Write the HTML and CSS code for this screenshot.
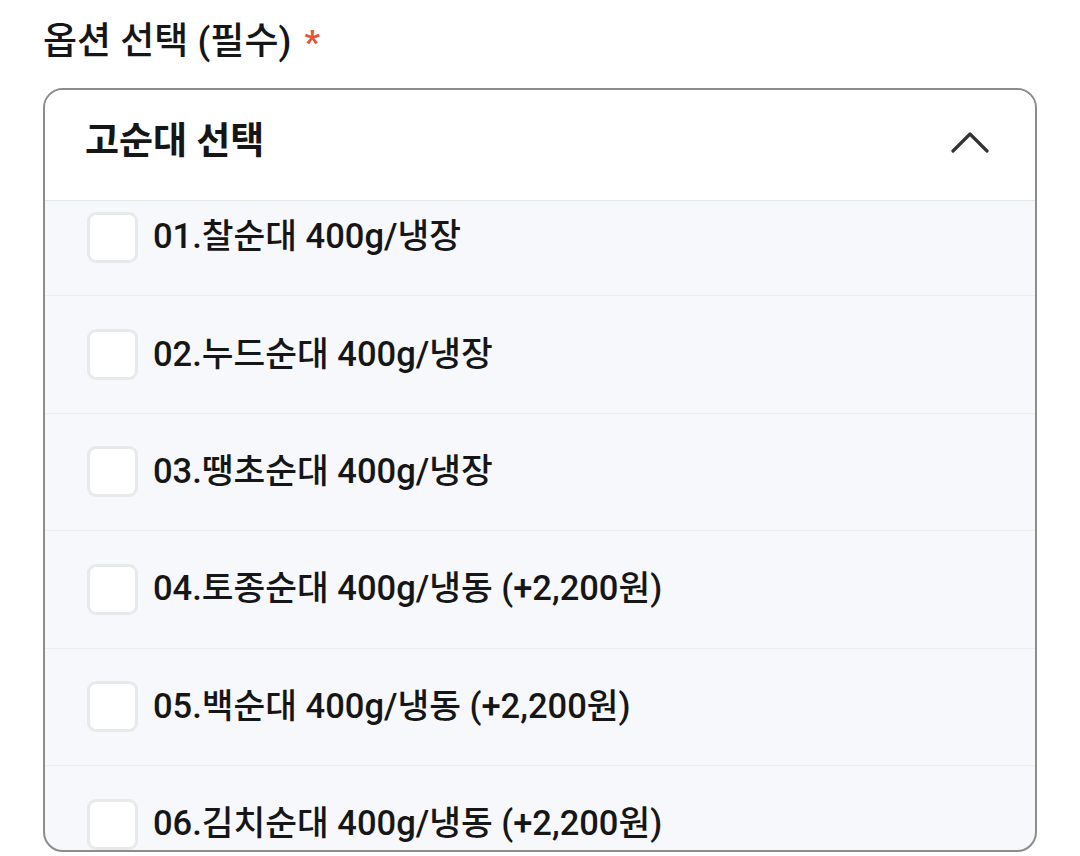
FILE: index.html
```html
<!DOCTYPE html>
<html lang="ko">
<head>
<meta charset="utf-8">
<link rel="stylesheet" href="styles.css">
</head>
<body>
<div class="page">
  <div class="label">옵션 선택 (필수) <span class="req">*</span></div>
  <div class="select">
    <div class="select-head">
      <span class="select-title">고순대 선택</span>
      <svg class="chev" width="38" height="24" viewBox="0 0 38 24"><path d="M2 21 L19 4 L36 21" fill="none" stroke="#333" stroke-width="3.2" stroke-linecap="round" stroke-linejoin="round"/></svg>
    </div>
    <div class="list">
      <div class="list-inner">
        <div class="row"><span class="box"></span><span class="txt">01.찰순대 400g/냉장</span></div>
        <div class="row"><span class="box"></span><span class="txt">02.누드순대 400g/냉장</span></div>
        <div class="row"><span class="box"></span><span class="txt">03.땡초순대 400g/냉장</span></div>
        <div class="row"><span class="box"></span><span class="txt">04.토종순대 400g/냉동 (+2,200원)</span></div>
        <div class="row"><span class="box"></span><span class="txt">05.백순대 400g/냉동 (+2,200원)</span></div>
        <div class="row"><span class="box"></span><span class="txt">06.김치순대 400g/냉동 (+2,200원)</span></div>
      </div>
    </div>
  </div>
</div>
</body>
</html>
```

FILE: styles.css
```css
* { box-sizing: border-box; }
html, body { margin: 0; padding: 0; background: #fff; }
body {
  font-family: Roboto, "Noto Sans CJK KR", sans-serif;
  color: #161616;
  width: 1080px;
  height: 856px;
  overflow: hidden;
}
.page {
  padding: 16px 43px 0 43px;
}
.label {
  font-size: 37px;
  font-weight: 500;
  line-height: 52px;
  height: 72px;
  letter-spacing: 0;
}
.req {
  color: #e4553b;
  font-weight: 700;
  font-size: 34px;
  margin-left: 4px;
}
.select {
  width: 994px;
  height: 764px;
  border: 2px solid #8c8c8c;
  border-radius: 20px;
  overflow: hidden;
  display: flex;
  flex-direction: column;
  background: #f7f8fb;
}
.select-head {
  height: 111px;
  flex: none;
  background: #fff;
  border-bottom: 1px solid #e6e8ec;
  display: flex;
  align-items: center;
  justify-content: space-between;
  padding: 0 46px 6px 40px;
}
.select-title {
  font-size: 37px;
  font-weight: 700;
  line-height: 44px;
  letter-spacing: 0;
}
.chev { display: block; }
.list {
  flex: 1;
  overflow: hidden;
}
.list-inner {
  margin-top: -22px;
}
.row {
  height: 117.4px;
  border-bottom: 1px solid #eceef1;
  display: flex;
  align-items: center;
  padding-left: 42px;
  gap: 15px;
}
.box {
  width: 51px;
  height: 51px;
  flex: none;
  background: #fff;
  border: 3px solid #e8e9ec;
  border-radius: 9px;
}
.txt {
  font-size: 34.5px;
  font-weight: 500;
  line-height: 42px;
  margin-top: -2px;
  letter-spacing: 0;
}
```
